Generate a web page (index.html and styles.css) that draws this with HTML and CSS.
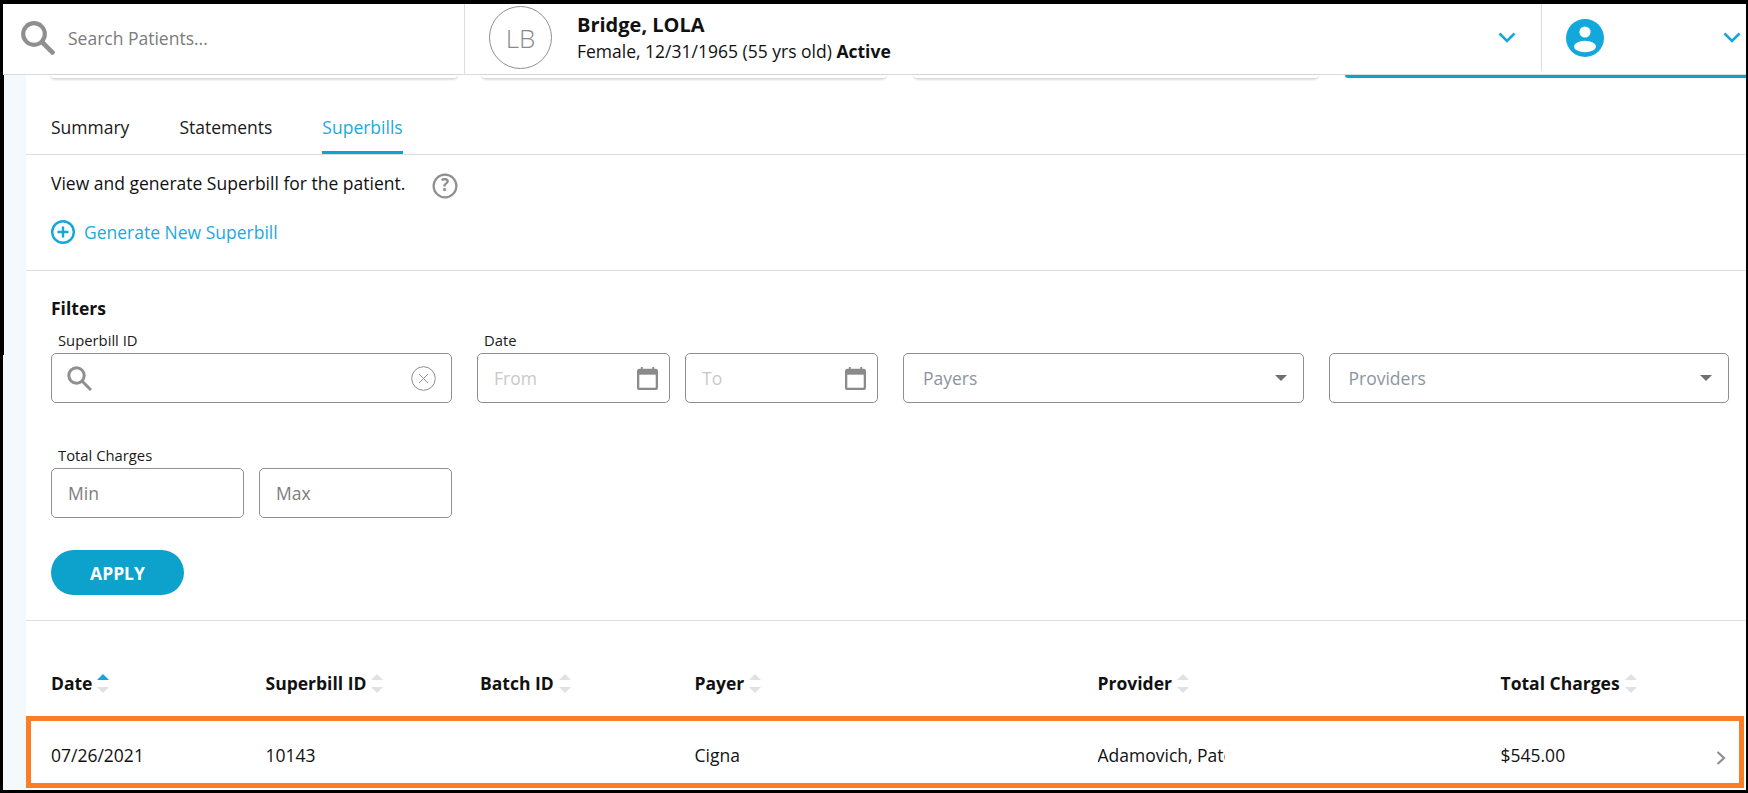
FILE: index.html
```html
<!DOCTYPE html>
<html lang="en">
<head>
<meta charset="utf-8">
<title>Superbills</title>
<link rel="stylesheet" href="styles.css">
</head>
<body>
<div class="frame">
  <header class="topbar">
    <div class="search">
      <svg class="search-icon" viewBox="0 0 34 34"><circle cx="13" cy="13" r="10.8" fill="none" stroke="#8f8f8f" stroke-width="4.2"/><path d="M20.5 20.5L33 33" stroke="#8f8f8f" stroke-width="4.6" fill="none"/></svg>
      <span class="search-text">Search Patients...</span>
    </div>
    <div class="patient">
      <div class="avatar">LB</div>
      <div class="patient-info">
        <div class="patient-name">Bridge, LOLA</div>
        <div class="patient-meta">Female, 12/31/1965 (55 yrs old) <b>Active</b></div>
      </div>
      <svg class="chev" viewBox="0 0 18 11"><path d="M1.5 1.5L9 9l7.5-7.5" fill="none" stroke="#12a8dc" stroke-width="2.6"/></svg>
    </div>
    <div class="account">
      <svg class="user-icon" viewBox="0 0 38 38"><circle cx="19" cy="19" r="19" fill="#12a8dc"/><circle cx="19" cy="13" r="5.6" fill="#fff"/><ellipse cx="19" cy="27.5" rx="11" ry="5.8" fill="#fff"/></svg>
      <svg class="chev" viewBox="0 0 18 11"><path d="M1.5 1.5L9 9l7.5-7.5" fill="none" stroke="#12a8dc" stroke-width="2.6"/></svg>
    </div>
  </header>
  <div class="layout">
    <aside class="rail"></aside>
    <main class="content">
      <div class="cards">
        <div class="card c1"></div>
        <div class="card c2"></div>
        <div class="card c3"></div>
        <div class="card c4"></div>
      </div>
      <nav class="tabs">
        <a class="tab">Summary</a>
        <a class="tab">Statements</a>
        <a class="tab active">Superbills</a>
      </nav>
      <section class="intro">
        <div class="intro-line">
          <span>View and generate Superbill for the patient.</span>
          <svg class="help" viewBox="0 0 26 26"><circle cx="13" cy="13" r="11.4" fill="none" stroke="#8f8f8f" stroke-width="2.2"/><text x="13" y="18.4" text-anchor="middle" class="help-q">?</text></svg>
        </div>
        <div class="gen">
          <svg class="gen-icon" viewBox="0 0 24 24"><circle cx="12" cy="12" r="10.8" fill="none" stroke="#12a8dc" stroke-width="2.4"/><path d="M12 6.5v11M6.5 12h11" stroke="#12a8dc" stroke-width="2.4" fill="none"/></svg>
          <span>Generate New Superbill</span>
        </div>
      </section>
      <section class="filters">
        <h2 class="filters-title">Filters</h2>
        <div class="filter-grid">
          <div class="field">
            <label class="lbl">Superbill ID</label>
            <div class="box">
              <svg class="box-search" viewBox="0 0 25 25"><circle cx="9.5" cy="9.5" r="7.7" fill="none" stroke="#8f8f8f" stroke-width="3"/><path d="M15 15l9 9" stroke="#8f8f8f" stroke-width="3" fill="none"/></svg>
              <svg class="box-clear" viewBox="0 0 25 25"><circle cx="12.5" cy="12.5" r="11.8" fill="none" stroke="#8f8f8f" stroke-width="1"/><path d="M8 8l9 9M17 8l-9 9" stroke="#8f8f8f" stroke-width="1" fill="none"/></svg>
            </div>
          </div>
          <div class="field">
            <label class="lbl">Date</label>
            <div class="pair">
              <div class="box"><span class="ph-light">From</span><svg class="cal" viewBox="0 0 22 24"><path d="M5 0v3M17 0v3" stroke="#8a8a8a" stroke-width="2"/><rect x="1.2" y="3" width="19.6" height="19.8" rx="1.5" fill="none" stroke="#8a8a8a" stroke-width="2.4"/><rect x="1" y="3" width="20" height="5" fill="#8a8a8a"/></svg></div>
              <div class="box"><span class="ph-light">To</span><svg class="cal" viewBox="0 0 22 24"><path d="M5 0v3M17 0v3" stroke="#8a8a8a" stroke-width="2"/><rect x="1.2" y="3" width="19.6" height="19.8" rx="1.5" fill="none" stroke="#8a8a8a" stroke-width="2.4"/><rect x="1" y="3" width="20" height="5" fill="#8a8a8a"/></svg></div>
            </div>
          </div>
          <div class="field">
            <span class="lbl">&nbsp;</span>
            <div class="box select"><span class="ph-sel">Payers</span><i class="caret"></i></div>
          </div>
          <div class="field">
            <span class="lbl">&nbsp;</span>
            <div class="box select"><span class="ph-sel">Providers</span><i class="caret"></i></div>
          </div>
          <div class="field">
            <label class="lbl">Total Charges</label>
            <div class="pair">
              <div class="box"><span class="ph">Min</span></div>
              <div class="box"><span class="ph">Max</span></div>
            </div>
          </div>
        </div>
        <button class="apply">APPLY</button>
      </section>
      <section class="results">
        <div class="thead">
          <div class="th">Date<span class="sort on"><i></i><i></i></span></div>
          <div class="th">Superbill ID<span class="sort"><i></i><i></i></span></div>
          <div class="th">Batch ID<span class="sort"><i></i><i></i></span></div>
          <div class="th">Payer<span class="sort"><i></i><i></i></span></div>
          <div class="th">Provider<span class="sort"><i></i><i></i></span></div>
          <div class="th">Total Charges<span class="sort"><i></i><i></i></span></div>
        </div>
        <div class="trow">
          <div class="td">07/26/2021</div>
          <div class="td">10143</div>
          <div class="td"></div>
          <div class="td">Cigna</div>
          <div class="td"><span class="clip">Adamovich, Patel</span></div>
          <div class="td">$545.00</div>
          <svg class="row-chev" viewBox="0 0 10 14"><path d="M1.5 1l6.5 6-6.5 6" fill="none" stroke="#8f8f8f" stroke-width="2.2"/></svg>
        </div>
      </section>
    </main>
  </div>
</div>
</body>
</html>
```
FILE: styles.css
```css
* { box-sizing: border-box; }
html, body { margin: 0; padding: 0; height: 100%; overflow: hidden; }
body { font-family: "Open Sans", "Noto Sans", sans-serif; font-size: 17.5px; color: #111; background: #000; }
.frame { width: 1748px; height: 793px; border-style: solid; border-color: #000; border-width: 4px 2px 3px 3px; background: #fff; display: flex; flex-direction: column; overflow: hidden; }

.topbar { height: 71px; flex: none; display: flex; background: #fff; border-bottom: 1px solid #dcdcdc; }
.search { width: 462px; display: flex; align-items: center; padding-left: 18px; padding-bottom: 2px; border-right: 1px solid #dcdcdc; }
.search-icon { width: 34px; height: 34px; margin-right: 13px; }
.search-text { color: #7b7b7b; }
.patient { width: 1077px; display: flex; align-items: center; padding: 0 25px 0 24px; border-right: 1px solid #dcdcdc; height: 67px; }
.avatar { width: 63px; height: 63px; flex: none; border: 1px solid #8f8f8f; border-radius: 50%; display: flex; align-items: center; justify-content: center; color: #8a8a8a; font-size: 26px; font-weight: 300; }
.patient-info { margin-left: 25px; flex: 1; }
.patient-name { font-size: 20px; font-weight: 700; line-height: 26px; }
.patient-meta { line-height: 26px; }
.chev { width: 18px; height: 11px; flex: none; }
.account { flex: 1; display: flex; align-items: center; justify-content: space-between; padding: 0 5px 0 24px; height: 67px; }
.user-icon { width: 38px; height: 38px; }

.layout { flex: 1; display: flex; min-height: 0; }
.rail { width: 23px; flex: none; background: linear-gradient(#000, #000) 0 0 / 1px 280px no-repeat, #f3f9fc; }
.content { flex: 1; min-width: 0; }

.cards { display: flex; height: 3px; padding-left: 25px; }
.card { height: 3px; background: #fff; border-radius: 0 0 5px 5px; box-shadow: 0 1px 3px rgba(0,0,0,.25); }
.c1 { width: 406px; margin-right: 25px; }
.c2 { width: 404px; margin-right: 28px; }
.c3 { width: 404px; margin-right: 27px; }
.c4 { flex: 1; background: #0ca2d6; box-shadow: none; border-radius: 0 0 0 4px; }

.tabs { display: flex; gap: 50px; height: 77px; padding: 0 0 0 25px; border-bottom: 1px solid #dedede; }
.tab { height: 76px; display: flex; align-items: flex-end; padding-bottom: 15px; line-height: 24px; color: #1a1a1a; }
.tab.active { color: #1fa8dc; border-bottom: 3px solid #0ca2d6; padding-bottom: 12px; }

.intro { height: 116px; padding: 14px 0 0 25px; border-bottom: 1px solid #dedede; }
.intro-line { display: flex; align-items: flex-start; line-height: 28px; }
.help { width: 26px; height: 26px; margin: 4px 0 0 27px; }
.help-q { font-family: "Open Sans", sans-serif; font-size: 17px; font-weight: 700; fill: #8f8f8f; }
.gen { display: flex; align-items: center; margin-top: 21px; color: #1fa8dc; }
.gen-icon { width: 24px; height: 24px; margin-right: 9px; }

.filters { height: 350px; padding: 25px 0 0 25px; border-bottom: 1px solid #dedede; }
.filters-title { margin: 0; font-size: 17.5px; font-weight: 700; line-height: 24px; }
.filter-grid { display: grid; grid-template-columns: 401px 401px 400.5px 400px; column-gap: 25px; row-gap: 41.5px; margin-top: 9.5px; }
.lbl { display: block; font-size: 14.8px; line-height: 20px; padding-left: 7px; height: 23.5px; color: #1a1a1a; }
.pair { display: grid; grid-template-columns: 1fr 1fr; column-gap: 15px; }
.box { height: 50px; border: 1px solid #8f8f8f; border-radius: 5px; display: flex; align-items: center; padding: 0 16px; background: #fff; }
.box-search { width: 25px; height: 25px; margin-left: -1px; }
.box-clear { width: 25px; height: 25px; margin-left: auto; margin-right: -1px; }
.ph-light { color: #c9c9c9; }
.ph { color: #7d7d7d; }
.ph-sel { color: #8b95a1; margin-left: 3px; }
.cal { width: 21px; height: 23px; margin-left: auto; margin-right: -5px; }
.select { justify-content: space-between; }
.caret { width: 0; height: 0; border-left: 6.5px solid transparent; border-right: 6.5px solid transparent; border-top: 6.5px solid #6f6f6f; }
.apply { display: block; margin-top: 32px; width: 133px; height: 45px; border: 0; border-radius: 23px; background: #0ca2cc; color: #fff; font-family: inherit; font-weight: 700; font-size: 17.5px; padding: 0; }

.thead, .trow { display: grid; grid-template-columns: 214.5px 214.5px 214.5px 403px 403px 1fr; }
.thead { padding: 50px 0 0 25px; height: 95px; align-items: start; }
.th { font-weight: 700; line-height: 24px; display: flex; align-items: center; }
.sort { display: inline-flex; flex-direction: column; gap: 7px; margin-left: 5px; }
.sort i { width: 0; height: 0; border-left: 6.5px solid transparent; border-right: 6.5px solid transparent; }
.sort i:first-child { border-bottom: 6px solid #dfe1e4; }
.sort i:last-child { border-top: 6px solid #dfe1e4; }
.sort.on i:first-child { border-bottom-color: #12a8dc; }
.trow { position: relative; height: 72px; margin-right: 2px; border: 5px solid #fb7d26; padding: 6px 0 0 20px; align-items: center; }
.clip { display: block; width: 127.5px; overflow: hidden; white-space: nowrap; }
.row-chev { position: absolute; right: 13px; top: 30px; width: 10px; height: 14px; }
```
